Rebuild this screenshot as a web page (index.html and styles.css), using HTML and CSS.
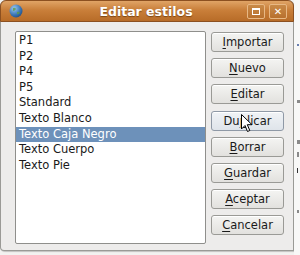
FILE: index.html
```html
<!DOCTYPE html>
<html lang="es">
<head>
  <meta charset="UTF-8">
  <title>Editar estilos</title>
  <link rel="stylesheet" href="styles.css">
</head>
<body>
  <div class="desktop">
    <div class="window">
      <header class="titlebar">
        <span class="app-icon">
          <svg width="14" height="14" viewBox="0 0 14 14">
            <defs>
              <radialGradient id="globe" cx="0.35" cy="0.3" r="0.8">
                <stop offset="0" stop-color="#9cc8f0"/>
                <stop offset="0.6" stop-color="#3d78b8"/>
                <stop offset="1" stop-color="#1d4a80"/>
              </radialGradient>
            </defs>
            <circle cx="7" cy="7" r="6.5" fill="url(#globe)"/>
            <path d="M4 4 Q6 3 7 5 Q6 7 4 7 Z M8 8 Q10 7 11 9 Q9 11 8 10 Z" fill="#5d9a4a" opacity="0.8"/>
          </svg>
        </span>
        <span class="title">Editar estilos</span>
        <div class="win-controls">
          <span class="win-btn"><span class="max-glyph"></span></span>
          <span class="win-btn close">✕</span>
        </div>
      </header>

      <div class="content">
        <ul class="style-list">
          <li>P1</li>
          <li>P2</li>
          <li>P4</li>
          <li>P5</li>
          <li>Standard</li>
          <li>Texto Blanco</li>
          <li class="selected">Texto Caja Negro</li>
          <li>Texto Cuerpo</li>
          <li>Texto Pie</li>
        </ul>

        <div class="actions">
          <button class="btn"><u>I</u>mportar</button>
          <button class="btn"><u>N</u>uevo</button>
          <button class="btn"><u>E</u>ditar</button>
          <button class="btn hover">Du<u>p</u>licar</button>
          <button class="btn"><u>B</u>orrar</button>
          <button class="btn"><u>G</u>uardar</button>
          <button class="btn"><u>A</u>ceptar</button>
          <button class="btn"><u>C</u>ancelar</button>
        </div>
      </div>
    </div>

    <div class="edge">
      <span class="mark m0"></span>
      <span class="mark m1"></span>
      <span class="mark m2"></span>
      <span class="mark m3"></span>
      <span class="mark m4"></span>
      <span class="mark m5"></span>
    </div>

    <svg class="cursor" width="12" height="19" viewBox="0 0 12 19">
      <path d="M0.5 0.5 L0.5 15 L4 11.5 L6.5 17.5 L8.8 16.5 L6.3 10.7 L11 10.7 Z" fill="#fff" stroke="#000" stroke-width="1"/>
    </svg>
  </div>
</body>
</html>
```

FILE: styles.css
```css
* {
  margin: 0;
  padding: 0;
  box-sizing: border-box;
}

body {
  font-family: 'DejaVu Sans', sans-serif;
  font-size: 11.5px;
  color: #1a1a1a;
  background: #f2f2f0;
  width: 300px;
  height: 255px;
  overflow: hidden;
}

.desktop {
  position: relative;
  display: flex;
  height: 255px;
}

.window {
  width: 294px;
  height: 251px;
  display: flex;
  flex-direction: column;
  background: #edeceb;
  border: 1px solid #9a9a96;
  border-top: none;
  border-radius: 6px 6px 0 4px;
  box-shadow: 1px 1px 1px rgba(0, 0, 0, 0.2);
}

.titlebar {
  height: 22px;
  display: flex;
  align-items: center;
  padding: 0 6px 0 6px;
  background: linear-gradient(#e0a466, #c97f3a 45%, #b86c28);
  border: 1px solid #8c5020;
  border-radius: 6px 6px 0 0;
  margin: 0 -1px;
}

.app-icon {
  display: flex;
  width: 14px;
  height: 14px;
  margin-left: 2px;
}

.title {
  flex: 1;
  text-align: center;
  color: #fff;
  font-weight: bold;
  font-size: 12.5px;
  text-shadow: 0 1px 1px rgba(80, 40, 0, 0.6);
  padding-left: 22px;
}

.win-controls {
  display: flex;
  gap: 4px;
}

.win-btn {
  width: 18px;
  height: 15px;
  display: flex;
  align-items: center;
  justify-content: center;
  border: 1px solid #e8b884;
  border-radius: 2px;
  background: linear-gradient(#c98a48, #b8702e);
  color: #fff;
  font-size: 10px;
  font-weight: bold;
}

.max-glyph {
  width: 8px;
  height: 7px;
  border: 1px solid #fff;
  border-top-width: 2px;
}

.content {
  flex: 1;
  display: flex;
  gap: 5px;
  padding: 9px 9px 0 14px;
}

.style-list {
  list-style: none;
  width: 191px;
  height: 213px;
  background: #fff;
  border: 1px solid #8f8f8c;
  border-radius: 2px;
  padding-top: 1px;
}

.style-list li {
  height: 15.6px;
  line-height: 15.6px;
  padding-left: 3px;
  white-space: nowrap;
}

.style-list li.selected {
  background: #6d91ba;
  color: #fff;
}

.actions {
  display: flex;
  flex-direction: column;
  gap: 6.2px;
  padding-top: 1px;
}

.btn {
  width: 73px;
  height: 20px;
  font-family: inherit;
  font-size: 11.5px;
  color: #1a1a1a;
  border: 1px solid #9a9a96;
  border-radius: 3px;
  background: linear-gradient(#f4f4f2, #e2e1de);
  box-shadow: inset 0 1px 0 #fff;
}

.btn.hover {
  background: linear-gradient(#f0f3f6, #dfe4ea);
  border-color: #8f99a6;
}

.btn u {
  text-decoration-thickness: 1px;
  text-underline-offset: 2px;
}

.edge {
  position: relative;
  flex: 1;
  background: #f8f8f7;
}

.mark {
  position: absolute;
  left: 3px;
  width: 2px;
  height: 3px;
  background: #8a8a8a;
}

.m0 { top: 44px; background: #6a7fb0; height: 2px; }
.m1 { top: 100px; width: 3px; }
.m2 { top: 140px; height: 4px; width: 3px; }
.m3 { top: 152px; height: 5px; }
.m4 { top: 168px; height: 5px; width: 1px; background: #333; }
.m5 { top: 210px; }

.cursor {
  position: absolute;
  left: 241px;
  top: 114px;
}
```
